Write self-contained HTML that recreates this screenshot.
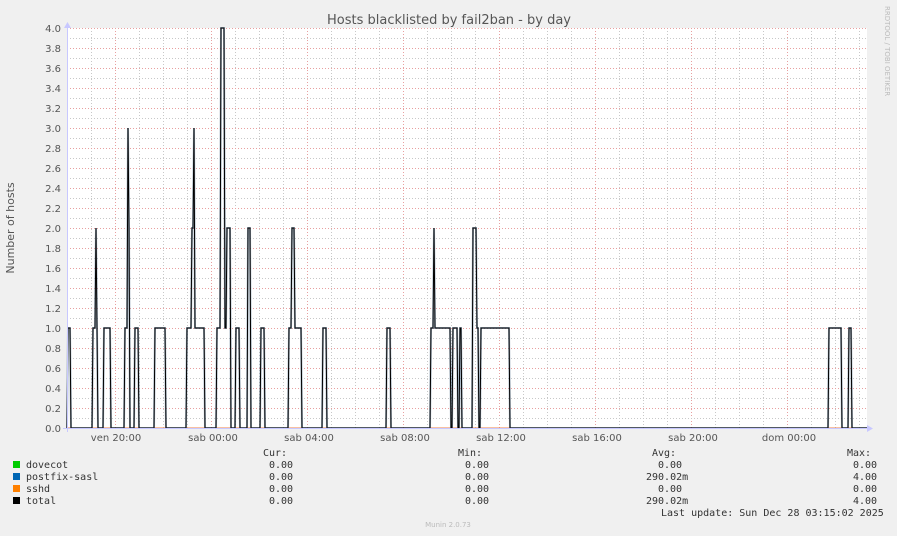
<!DOCTYPE html>
<html><head><meta charset="utf-8"><style>
html,body{margin:0;padding:0;background:#f0f0f0;width:897px;height:536px;overflow:hidden}
svg{display:block}
.m{font-family:"DejaVu Sans Mono","Liberation Mono",monospace;font-size:10px;fill:#333}
.s{font-family:"DejaVu Sans","Liberation Sans",sans-serif;font-size:10px;fill:#555}
</style></head><body>
<svg id="g" width="897" height="536" xmlns="http://www.w3.org/2000/svg">
<rect x="67" y="28" width="800" height="400" fill="#ffffff"/>
<g id="grid"></g>
<text x="449" y="24" text-anchor="middle" font-family="DejaVu Sans,Liberation Sans,sans-serif" font-size="13" fill="#555">Hosts blacklisted by fail2ban - by day</text>
<text transform="translate(14,228) rotate(-90)" text-anchor="middle" class="s" style="font-size:11px">Number of hosts</text>
<text transform="translate(885,6) rotate(90)" font-family="DejaVu Sans,sans-serif" font-size="7" fill="#bbb">RRDTOOL / TOBI OETIKER</text>
<g id="ylab" class="s"></g>
<g class="s" text-anchor="middle">
<text x="116" y="441">ven 20:00</text><text x="213" y="441">sab 00:00</text><text x="309" y="441">sab 04:00</text><text x="405" y="441">sab 08:00</text><text x="501" y="441">sab 12:00</text><text x="597" y="441">sab 16:00</text><text x="693" y="441">sab 20:00</text><text x="789" y="441">dom 00:00</text>
</g>
<line x1="67" y1="428" x2="867" y2="428" stroke="#f08040" stroke-width="1"/>
<polyline id="pl2" fill="none" stroke="#4a6a88" stroke-width="2" opacity="0.5"/>
<polyline id="pl" fill="none" stroke="#000" stroke-width="1"/>
<line x1="67.5" y1="24" x2="67.5" y2="432" stroke="#c8c8ff"/>
<line x1="63" y1="428.5" x2="871" y2="428.5" stroke="#c8c8ff"/>
<path d="M64 28 L67.5 22 L71 28Z M867 425 L873 428.5 L867 432Z" fill="#c8c8ff"/>
<rect x="13" y="461" width="7" height="7" fill="#00cc00"/>
<rect x="13" y="473" width="7" height="7" fill="#0066b3"/>
<rect x="13" y="485" width="7" height="7" fill="#ff8000"/>
<rect x="13" y="497" width="7" height="7" fill="#000"/>
<g class="m">
<text x="26" y="468">dovecot</text><text x="26" y="480">postfix-sasl</text><text x="26" y="492">sshd</text><text x="26" y="504">total</text>
<text x="263" y="456">Cur:</text><text x="458" y="456">Min:</text><text x="652" y="456">Avg:</text><text x="847" y="456">Max:</text>
<text x="269" y="468">0.00</text><text x="269" y="480">0.00</text><text x="269" y="492">0.00</text><text x="269" y="504">0.00</text>
<text x="465" y="468">0.00</text><text x="465" y="480">0.00</text><text x="465" y="492">0.00</text><text x="465" y="504">0.00</text>
<text x="658" y="468">0.00</text><text x="646" y="480">290.02m</text><text x="658" y="492">0.00</text><text x="646" y="504">290.02m</text>
<text x="853" y="468">0.00</text><text x="853" y="480">4.00</text><text x="853" y="492">0.00</text><text x="853" y="504">4.00</text>
<text x="661" y="516">Last update: Sun Dec 28 03:15:02 2025</text>
</g>
<text x="448" y="527" text-anchor="middle" font-family="DejaVu Sans,sans-serif" font-size="7" fill="#bbb">Munin 2.0.73</text>
</svg>
<script>
var ns="http://www.w3.org/2000/svg",g=document.getElementById('grid'),yl=document.getElementById('ylab');
function L(x1,y1,x2,y2,c){var l=document.createElementNS(ns,'line');l.setAttribute('x1',x1);l.setAttribute('y1',y1);l.setAttribute('x2',x2);l.setAttribute('y2',y2);l.setAttribute('stroke',c);l.setAttribute('stroke-dasharray','1,2');g.appendChild(l);}
for(var x=67+24;x<867;x+=24){var red=((x-116)%96===0)||((x-115)%96===0);L(x+.5,28,x+.5,428,red?'#e8a0a0':'#c8c8c8');}
for(var i=0;i<40;i++){var y=28+i*10;L(67,y+.5,867,y+.5,i%2==0?'#e8a0a0':'#c8c8c8');}
for(var k=0;k<=20;k++){var t=document.createElementNS(ns,'text');t.setAttribute('x',61);t.setAttribute('y',432-k*20);t.setAttribute('text-anchor','end');t.textContent=(k*0.2).toFixed(1);yl.appendChild(t);}
var st=[[67,1],[70,0],[92,1],[95,2],[96,1],[97,0],[103,1],[110,0],[124,1],[127,3],[128,2],[129,0],[134,1],[138,0],[154,1],[165,0],[186,1],[191,2],[193,3],[194,1],[204,0],[216,1],[220,4],[224,1],[226,2],[230,0],[235,1],[239,0],[247,2],[250,0],[260,1],[264,0],[288,1],[291,2],[294,1],[301,0],[322,1],[326,0],[386,1],[390,0],[430,1],[433,2],[434,1],[450,0],[452,1],[457,0],[459,1],[461,0],[472,2],[476,1],[478,0],[480,1],[509,0],[828,1],[841,0],[848,1],[851,0],[867,0]];
var p=[],py=428;
for(var j=0;j<st.length;j++){var x=st[j][0],y=428-st[j][1]*100;p.push(x+','+py);p.push((x+1)+','+y);py=y;}
var s=p.join(' ');document.getElementById('pl').setAttribute('points',s);document.getElementById('pl2').setAttribute('points',s);
</script>
</body></html>
